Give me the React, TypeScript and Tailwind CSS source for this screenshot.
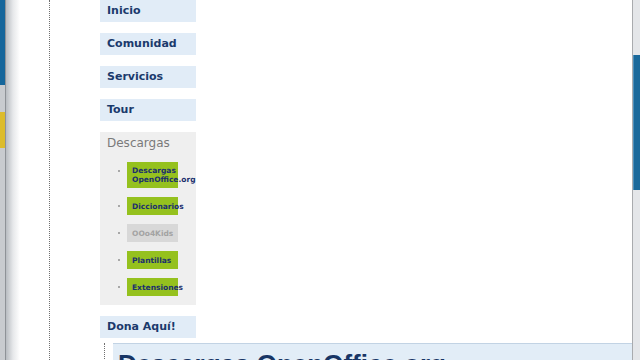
import React from 'react';

const navItems = ['Inicio', 'Comunidad', 'Servicios', 'Tour'];

const downloads = [
  { lines: ['Descargas', 'OpenOffice.org'], active: true },
  { lines: ['Diccionarios'], active: true },
  { lines: ['OOo4Kids'], active: false },
  { lines: ['Plantillas'], active: true },
  { lines: ['Extensiones'], active: true },
];

const NavBox: React.FC<{ label: string }> = ({ label }) => (
  <div className="h-[22px] bg-[#e1ecf7] px-[7px] text-[11px] font-bold leading-[22px] text-[#1b3a6c]">
    {label}
  </div>
);

const App: React.FC = () => {
  return (
    <div
      className="flex h-[360px] w-[640px] overflow-hidden bg-white"
      style={{ fontFamily: '"DejaVu Sans", "Liberation Sans", sans-serif' }}
    >
      {/* left window frame */}
      <div className="flex w-[20px] shrink-0">
        <div className="flex w-[5px] flex-col">
          <div className="h-[85px] bg-[#15669b]" />
          <div className="h-[27px] bg-[#c8cbcf]" />
          <div className="h-[36px] bg-[#dcbc2c]" />
          <div className="flex-1 bg-[#c8cbcf]" />
        </div>
        <div className="w-px bg-[#8e9297]" />
        <div className="flex-1 bg-gradient-to-r from-[#b8bcc1] via-[#e6e8ea] to-white" />
      </div>

      {/* page */}
      <div className="flex-1 pl-[29px]">
        <div className="h-full border-l border-dotted border-[#707070] pl-[50px]">
          <div className="flex w-[96px] flex-col gap-[11px]">
            {navItems.map((item) => (
              <NavBox key={item} label={item} />
            ))}

            <div className="bg-[#efefef] px-[7px] pt-[3px] pb-[9px]">
              <div className="text-[12px] leading-[16px] text-[#7a7a7a]">Descargas</div>
              <ul className="mt-[11px] flex flex-col gap-[9px]">
                {downloads.map((d) => (
                  <li key={d.lines.join(' ')} className="flex items-start">
                    <span className="ml-[11px] mt-[8px] h-[2px] w-[2px] bg-[#a8a8a8]" />
                    <span
                      className={`ml-[7px] w-[51px] whitespace-nowrap px-[5px] text-[7.5px] font-bold leading-[9px] ${
                        d.active ? 'bg-[#95c11e] text-[#1b2f6e]' : 'bg-[#d8d8d8] text-[#a3a3a3]'
                      } ${d.lines.length === 1 ? 'py-[4.5px]' : 'py-[4px]'}`}
                    >
                      {d.lines.map((l) => (
                        <div key={l}>{l}</div>
                      ))}
                    </span>
                  </li>
                ))}
              </ul>
            </div>

            <NavBox label="Dona Aquí!" />
          </div>

          <div className="mt-[5px] flex">
            <div className="ml-[4px] h-[40px] border-l border-dotted border-[#707070]" />
            <div
              className="ml-[8px] flex-1 whitespace-nowrap border-t border-[#c2d3e4] bg-[#e2edf7] pl-[5px] pt-[6px] text-[26px] font-bold leading-[28px] text-[#173565]"
              style={{ fontFamily: '"Liberation Sans", Arial, sans-serif' }}
            >
              Descargas OpenOffice.org
            </div>
          </div>
        </div>
      </div>

      {/* scrollbar */}
      <div className="w-[8px] shrink-0 border-l border-[#a9abae] bg-[#e4e6e9]">
        <div className="mt-[55px] h-[135px] border-l border-[#4d8fba] bg-[#1a699b]" />
      </div>
    </div>
  );
};

export default App;
